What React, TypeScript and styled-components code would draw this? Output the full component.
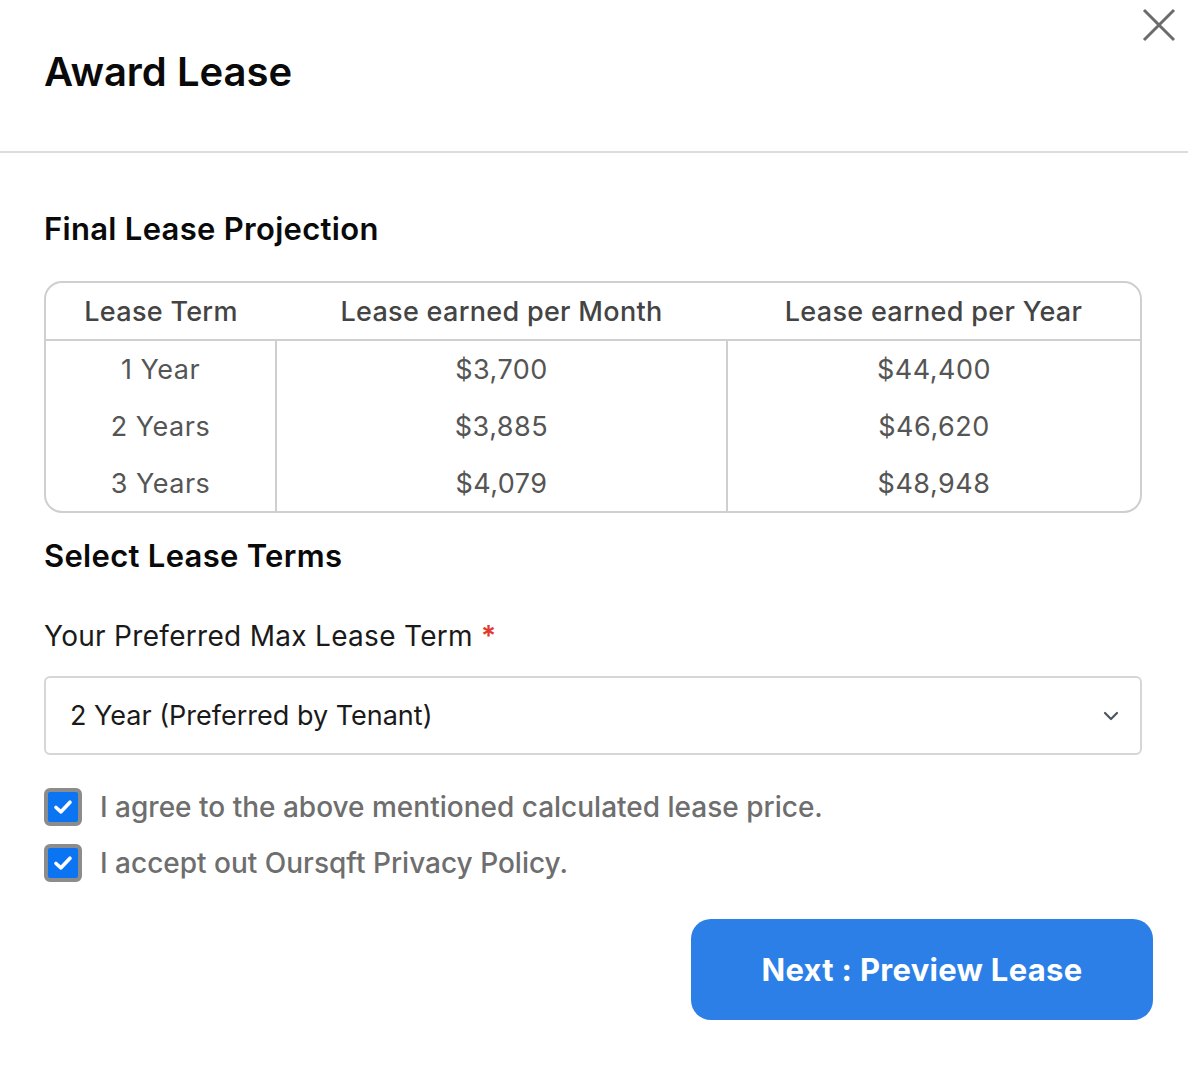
import React from 'react';
import styled, { createGlobalStyle } from 'styled-components';

const GlobalStyle = createGlobalStyle`
  html, body {
    margin: 0;
    padding: 0;
    background: #ffffff;
  }
  body {
    font-family: Inter, "Noto Sans", sans-serif;
    color: #111;
  }
  * { box-sizing: border-box; }
`;

const rows = [
  { term: '1 Year', month: '$3,700', year: '$44,400' },
  { term: '2 Years', month: '$3,885', year: '$46,620' },
  { term: '3 Years', month: '$4,079', year: '$48,948' },
];

const CheckIcon = () => (
  <svg width="20" height="16" viewBox="0 0 20 16" fill="none">
    <path d="M3 8.5 L8 12.8 L17 3.2" stroke="#fff" strokeWidth="3.6" strokeLinecap="round" strokeLinejoin="round" />
  </svg>
);

const App: React.FC = () => {
  return (
    <>
      <GlobalStyle />
      <Modal>
        <Header>
          <Title>Award Lease</Title>
          <CloseButton aria-label="Close">
            <svg width="34" height="34" viewBox="0 0 34 34">
              <path d="M2 2 L32 32 M32 2 L2 32" stroke="#6b6b6b" strokeWidth="3" />
            </svg>
          </CloseButton>
        </Header>

        <Body>
          <SectionTitle>Final Lease Projection</SectionTitle>

          <TableBox>
            <Table>
              <colgroup>
                <col style={{ width: 230 }} />
                <col style={{ width: 451 }} />
                <col />
              </colgroup>
              <thead>
                <tr>
                  <Th>Lease Term</Th>
                  <Th>Lease earned per Month</Th>
                  <Th>Lease earned per Year</Th>
                </tr>
              </thead>
              <tbody>
                {rows.map((r) => (
                  <tr key={r.term}>
                    <Td>{r.term}</Td>
                    <Td>{r.month}</Td>
                    <Td>{r.year}</Td>
                  </tr>
                ))}
              </tbody>
            </Table>
          </TableBox>

          <TermsTitle>Select Lease Terms</TermsTitle>

          <FieldLabel>
            Your Preferred Max Lease Term <Required>*</Required>
          </FieldLabel>

          <SelectBox>
            <SelectValue>2 Year (Preferred by Tenant)</SelectValue>
            <svg width="16" height="10" viewBox="0 0 16 10" fill="none">
              <path d="M2 2 L8 8 L14 2" stroke="#4b5563" strokeWidth="2.2" strokeLinecap="round" strokeLinejoin="round" />
            </svg>
          </SelectBox>

          <Checks>
            <CheckRow>
              <CheckBox><CheckIcon /></CheckBox>
              <CheckText>I agree to the above mentioned calculated lease price.</CheckText>
            </CheckRow>
            <CheckRow>
              <CheckBox><CheckIcon /></CheckBox>
              <CheckText>I accept out Oursqft Privacy Policy.</CheckText>
            </CheckRow>
          </Checks>

          <Footer>
            <PrimaryButton>Next : Preview Lease</PrimaryButton>
          </Footer>
        </Body>
      </Modal>
    </>
  );
};

export default App;

const Modal = styled.div`
  width: 1188px;
  min-height: 1076px;
  background: #fff;
`;

const Header = styled.div`
  position: relative;
  height: 153px;
  padding: 47px 44px 0;
  border-bottom: 2px solid #dcdcdc;
`;

const Title = styled.h1`
  margin: 0;
  font-size: 40px;
  font-weight: 600;
  letter-spacing: 0;
  line-height: 50px;
  color: #0a0a0a;
`;

const CloseButton = styled.button`
  position: absolute;
  top: 8px;
  right: 12px;
  width: 34px;
  height: 34px;
  padding: 0;
  border: none;
  background: none;
  cursor: pointer;
  svg { display: block; }
`;

const Body = styled.div`
  padding: 54px 46px 0 44px;
`;

const SectionTitle = styled.h2`
  margin: 0;
  font-size: 31px;
  font-weight: 600;
  letter-spacing: 0.3px;
  line-height: 44px;
  color: #0a0a0a;
`;

const TableBox = styled.div`
  margin-top: 30px;
  width: 1098px;
  border: 2px solid #cfcfcf;
  border-radius: 18px;
  overflow: hidden;
`;

const Table = styled.table`
  width: 100%;
  border-collapse: collapse;
  table-layout: fixed;
`;

const Th = styled.th`
  height: 57px;
  padding: 0;
  font-size: 27px;
  font-weight: 500;
  letter-spacing: 0.3px;
  color: #444;
  text-align: center;
  border-bottom: 2px solid #cfcfcf;
`;

const Td = styled.td`
  height: 57px;
  padding: 1px 0 0;
  font-size: 27px;
  font-weight: 400;
  letter-spacing: 0.5px;
  color: #555;
  text-align: center;
  border-left: 2px solid #cfcfcf;

  &:first-child {
    border-left: none;
  }
`;

const TermsTitle = styled(SectionTitle)`
  margin-top: 21px;
`;

const FieldLabel = styled.div`
  margin-top: 38px;
  font-size: 28px;
  font-weight: 400;
  letter-spacing: 0.3px;
  line-height: 40px;
  color: #1a1a1a;
`;

const Required = styled.span`
  color: #e03a2f;
  font-weight: 600;
`;

const SelectBox = styled.div`
  margin-top: 20px;
  width: 1098px;
  height: 79px;
  display: flex;
  align-items: center;
  justify-content: space-between;
  padding: 0 21px 0 24px;
  border: 2px solid #d6d6d6;
  border-radius: 6px;
`;

const SelectValue = styled.span`
  font-size: 27px;
  letter-spacing: 0;
  color: #1a1a1a;
`;

const Checks = styled.div`
  margin-top: 33px;
  display: flex;
  flex-direction: column;
  gap: 18px;
`;

const CheckRow = styled.label`
  display: flex;
  align-items: center;
  gap: 18px;
  height: 38px;
`;

const CheckBox = styled.span`
  width: 38px;
  height: 38px;
  display: flex;
  align-items: center;
  justify-content: center;
  border: 4px solid #8c8c8c;
  border-radius: 6px;
  background: #0a74f2;
  flex-shrink: 0;
`;

const CheckText = styled.span`
  font-size: 28px;
  font-weight: 500;
  letter-spacing: 0;
  color: #6e6e6e;
`;

const Footer = styled.div`
  margin-top: 37px;
  display: flex;
  justify-content: flex-end;
  margin-right: -11px;
`;

const PrimaryButton = styled.button`
  width: 462px;
  height: 101px;
  border: none;
  border-radius: 20px;
  background: #2b7fe6;
  color: #fff;
  font-family: Inter, "Noto Sans", sans-serif;
  font-size: 31px;
  font-weight: 700;
  letter-spacing: 0.3px;
  cursor: pointer;
`;
